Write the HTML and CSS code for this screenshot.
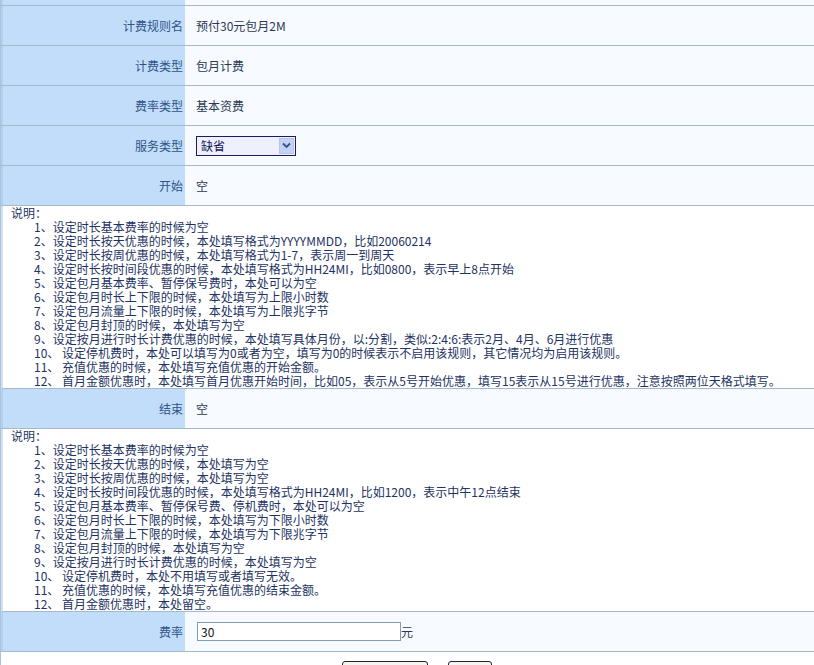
FILE: index.html
```html
<!DOCTYPE html>
<html lang="zh-CN">
<head>
  <meta charset="UTF-8"/>
  <title>计费规则</title>
  <link rel="stylesheet" href="styles.css">
</head>
<body>
  <div class="form">
    <div class="row row-top">
      <div class="label"></div>
      <div class="value"></div>
    </div>

    <div class="row">
      <div class="label">计费规则名</div>
      <div class="value">预付30元包月2M</div>
    </div>
    <div class="row">
      <div class="label">计费类型</div>
      <div class="value">包月计费</div>
    </div>
    <div class="row">
      <div class="label">费率类型</div>
      <div class="value">基本资费</div>
    </div>
    <div class="row">
      <div class="label">服务类型</div>
      <div class="value">
        <div class="select">
          <span class="select-text">缺省</span>
          <span class="select-btn">
            <svg width="9" height="7" viewBox="0 0 9 7"><path d="M1 1.5 L4.5 5 L8 1.5" fill="none" stroke="#3a4f8a" stroke-width="1.8"/></svg>
          </span>
        </div>
      </div>
    </div>
    <div class="row">
      <div class="label">开始</div>
      <div class="value">空</div>
    </div>

    <div class="note">
      <div class="note-title">说明：</div>
      <ol class="note-list">
        <li>1、设定时长基本费率的时候为空</li>
        <li>2、设定时长按天优惠的时候，本处填写格式为YYYYMMDD，比如20060214</li>
        <li>3、设定时长按周优惠的时候，本处填写格式为1-7，表示周一到周天</li>
        <li>4、设定时长按时间段优惠的时候，本处填写格式为HH24MI，比如0800，表示早上8点开始</li>
        <li>5、设定包月基本费率、暂停保号费时，本处可以为空</li>
        <li>6、设定包月时长上下限的时候，本处填写为上限小时数</li>
        <li>7、设定包月流量上下限的时候，本处填写为上限兆字节</li>
        <li>8、设定包月封顶的时候，本处填写为空</li>
        <li>9、设定按月进行时长计费优惠的时候，本处填写具体月份，以:分割，类似:2:4:6:表示2月、4月、6月进行优惠</li>
        <li>10、 设定停机费时，本处可以填写为0或者为空，填写为0的时候表示不启用该规则，其它情况均为启用该规则。</li>
        <li>11、 充值优惠的时候，本处填写充值优惠的开始金额。</li>
        <li>12、 首月金额优惠时，本处填写首月优惠开始时间，比如05，表示从5号开始优惠，填写15表示从15号进行优惠，注意按照两位天格式填写。</li>
      </ol>
    </div>

    <div class="row">
      <div class="label">结束</div>
      <div class="value">空</div>
    </div>

    <div class="note">
      <div class="note-title">说明：</div>
      <ol class="note-list">
        <li>1、设定时长基本费率的时候为空</li>
        <li>2、设定时长按天优惠的时候，本处填写为空</li>
        <li>3、设定时长按周优惠的时候，本处填写为空</li>
        <li>4、设定时长按时间段优惠的时候，本处填写格式为HH24MI，比如1200，表示中午12点结束</li>
        <li>5、设定包月基本费率、暂停保号费、停机费时，本处可以为空</li>
        <li>6、设定包月时长上下限的时候，本处填写为下限小时数</li>
        <li>7、设定包月流量上下限的时候，本处填写为下限兆字节</li>
        <li>8、设定包月封顶的时候，本处填写为空</li>
        <li>9、设定按月进行时长计费优惠的时候，本处填写为空</li>
        <li>10、 设定停机费时，本处不用填写或者填写无效。</li>
        <li>11、 充值优惠的时候，本处填写充值优惠的结束金额。</li>
        <li>12、 首月金额优惠时，本处留空。</li>
      </ol>
    </div>

    <div class="row">
      <div class="label">费率</div>
      <div class="value">
        <input class="text-input" type="text" value="30"><span class="unit">元</span>
      </div>
    </div>

    <div class="actions">
      <button class="btn btn-wide">保存</button>
      <button class="btn">返回</button>
    </div>
  </div>
</body>
</html>
```

FILE: styles.css
```css
/* COLORS */
:root {
  --label-bg: #c2ddf9;
  --value-bg: #f7fbff;
  --line: #a6b9cb;
  --line-soft: #dbe8f4;
  --label-text: #2f5489;
  --value-text: #2c3853;
  --note-text: #1d3363;
}

* { box-sizing:border-box; margin:0; padding:0 }
html, body {
  background:#fff;
  font-family:"Noto Sans CJK SC","Liberation Sans",sans-serif;
  font-size:12px;
  color: var(--value-text);
}

/* FORM ROWS */
.form {
  width:814px;
  border-left:1px solid #a9c3de;
}
.row {
  display:grid;
  grid-template-columns:184px 1fr;
  height:40px;
  border-bottom:1px solid var(--line);
  box-shadow: 0 -1px 0 var(--line-soft) inset;
}
.row-top { height:6px; }
.label {
  background: var(--label-bg);
  color: var(--label-text);
  text-align:right;
  padding-right:2px;
  display:flex;
  align-items:center;
  justify-content:flex-end;
  border-left:2px solid #b5d0ec;
}
.value {
  background: var(--value-bg);
  padding-left:11px;
  display:flex;
  align-items:center;
}

/* SELECT */
.select {
  width:100px;
  height:20px;
  border:1px solid #1c1c5c;
  background:#eef1fd;
  display:flex;
  align-items:center;
  justify-content:space-between;
  padding:0 1px 0 4px;
  color:#141458;
}
.select-btn {
  width:15px;
  height:16px;
  background:#c3d1f2;
  border:1px solid #b6c6ea;
  display:flex;
  align-items:center;
  justify-content:center;
}

/* INPUT */
.text-input {
  width:204px;
  height:19px;
  border:1px solid #7f9db9;
  font-family:inherit;
  font-size:12px;
  padding:0 3px;
  color:#111;
  background:#fff;
  margin-left:1px;
}
.unit { color: var(--value-text); }

/* NOTES */
.note {
  background:#fff;
  color: var(--note-text);
  line-height:14px;
  padding-left:8px;
  border-bottom:1px solid var(--line);
  border-left:2px solid #d2e2f3;
}
.note-list {
  list-style:none;
  padding-left:23px;
}

/* ACTIONS */
.actions {
  display:flex;
  justify-content:center;
  gap:20px;
  padding:9px 0 0 18px;
  height:40px;
}
.btn {
  height:24px;
  width:44px;
  border:1px solid #223;
  border-radius:3px;
  background:#f4f4f0;
  font-family:inherit;
  font-size:12px;
}
.btn-wide { width:86px; }
```
